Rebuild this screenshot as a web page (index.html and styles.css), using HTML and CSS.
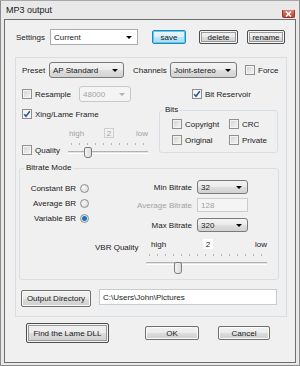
FILE: index.html
```html
<!DOCTYPE html>
<html lang="en">
<head>
  <meta charset="UTF-8" />
  <title>MP3 output</title>
  <link rel="stylesheet" href="styles.css">
</head>
<body>
  <div class="window">
    <div class="titlebar">
      <span class="title">MP3 output</span>
      <span class="close-btn"><svg width="7" height="6" viewBox="0 0 7 6"><path d="M1 0.5 L6 5.5 M6 0.5 L1 5.5" stroke="#fff" stroke-width="1.6"/></svg></span>
    </div>

    <div class="client">
      <div class="settings-row">
        <span class="lbl settings-lbl">Settings</span>
        <div class="combo edit settings-combo"><span>Current</span><i class="arrow"></i></div>
        <button class="btn btn-default save-btn">save</button>
        <button class="btn btn-framed delete-btn">delete</button>
        <button class="btn btn-framed rename-btn">rename</button>
      </div>

      <div class="panel">
        <div class="row preset-row">
          <span class="lbl preset-lbl">Preset</span>
          <div class="combo preset-combo"><span>AP Standard</span><i class="arrow"></i></div>
          <span class="lbl channels-lbl">Channels</span>
          <div class="combo channels-combo"><span>Joint-stereo</span><i class="arrow"></i></div>
          <span class="check force-check"><i class="box"></i>Force</span>
        </div>

        <div class="row resample-row">
          <span class="check resample-check"><i class="box"></i>Resample</span>
          <div class="combo disabled resample-combo"><span>48000</span><i class="arrow"></i></div>
          <span class="check reservoir-check"><i class="box checked"><svg width="8" height="8" viewBox="0 0 8 8"><path d="M1.2 4.2 L3 6.3 L6.8 1.2" fill="none" stroke="#2b4f9e" stroke-width="1.5"/></svg></i>Bit Reservoir</span>
        </div>

        <div class="mid">
          <div class="mid-left">
            <span class="check xing-check"><i class="box checked"><svg width="8" height="8" viewBox="0 0 8 8"><path d="M1.2 4.2 L3 6.3 L6.8 1.2" fill="none" stroke="#2b4f9e" stroke-width="1.5"/></svg></i>Xing/Lame Frame</span>
            <div class="scale-row quality-scale">
              <span class="scale-high">high</span>
              <span class="num-box disabled">2</span>
              <span class="scale-low">low</span>
            </div>
            <div class="quality-row">
              <span class="check quality-check"><i class="box"></i>Quality</span>
              <div class="slider quality-slider">
                <div class="ticks"></div>
                <div class="track"></div>
                <div class="thumb"></div>
              </div>
            </div>
          </div>

          <fieldset class="group bits-group">
            <legend>Bits</legend>
            <div class="bits-grid">
              <span class="check"><i class="box"></i>Copyright</span>
              <span class="check"><i class="box"></i>CRC</span>
              <span class="check"><i class="box"></i>Original</span>
              <span class="check"><i class="box"></i>Private</span>
            </div>
          </fieldset>
        </div>

        <fieldset class="group bitrate-group">
          <legend>Bitrate Mode</legend>
          <div class="bitrate-top">
            <div class="radio-col">
              <span class="radio constant-radio">Constant BR<i class="dot"></i></span>
              <span class="radio">Average BR<i class="dot"></i></span>
              <span class="radio">Variable BR<i class="dot selected"></i></span>
            </div>
            <div class="rate-col">
              <div class="rate-row min-row">
                <span class="lbl rate-lbl">Min Bitrate</span>
                <div class="combo rate-combo"><span>32</span><i class="arrow"></i></div>
              </div>
              <div class="rate-row avg-row">
                <span class="lbl rate-lbl disabled-text">Average Bitrate</span>
                <div class="textbox disabled rate-combo">128</div>
              </div>
              <div class="rate-row max-row">
                <span class="lbl rate-lbl">Max Bitrate</span>
                <div class="combo rate-combo"><span>320</span><i class="arrow"></i></div>
              </div>
            </div>
          </div>
          <div class="vbr">
            <span class="lbl vbr-lbl">VBR Quality</span>
            <div class="vbr-right">
              <div class="scale-row vbr-scale">
                <span class="scale-high">high</span>
                <span class="num-box">2</span>
                <span class="scale-low">low</span>
              </div>
              <div class="slider vbr-slider">
                <div class="ticks"></div>
                <div class="track"></div>
                <div class="thumb"></div>
              </div>
            </div>
          </div>
        </fieldset>

        <div class="row output-row">
          <button class="btn output-btn">Output Directory</button>
          <div class="textbox output-path">C:\Users\John\Pictures</div>
        </div>
      </div>

      <div class="bottom-row">
        <button class="btn btn-framed find-btn">Find the Lame DLL</button>
        <button class="btn ok-btn">OK</button>
        <button class="btn cancel-btn">Cancel</button>
      </div>
    </div>
  </div>
</body>
</html>
```

FILE: styles.css
```css
* {
  box-sizing: border-box;
}

body {
  margin: 0;
  background: #e6e6e6;
  font-family: "Liberation Sans", Arial, sans-serif;
  font-size: 8px;
  color: #1a1a1a;
}

.window {
  width: 300px;
  height: 366px;
  background: #e9e9e9;
  border: 1px solid #8c8c8c;
  border-top-color: #a8a8a8;
  padding: 0 3px 2px 3px;
  display: flex;
  flex-direction: column;
}

.titlebar {
  height: 18px;
  display: flex;
  align-items: flex-start;
}

.title {
  margin: 4px 0 0 2px;
  font-size: 9px;
  color: #1a1a1a;
}

.close-btn {
  margin: 9px 1px 0 auto;
  width: 13px;
  height: 8px;
  background: linear-gradient(#e08070, #c0402e);
  border: 1px solid #8e3a2e;
  border-top: none;
  border-radius: 0 0 2px 2px;
  display: flex;
  align-items: center;
  justify-content: center;
}

.client {
  flex: 1;
  background: #f0f0f0;
  border: 1px solid #6f6f6f;
}

.lbl {
  white-space: nowrap;
}

/* settings */
.settings-row {
  display: flex;
  align-items: center;
  height: 16px;
  margin-top: 9px;
  padding-left: 11px;
}

.settings-lbl {
  width: 34px;
}

.combo {
  height: 16px;
  display: flex;
  align-items: center;
  padding-left: 3px;
  border: 1px solid #7a7a7a;
  border-radius: 3px;
  background: linear-gradient(#f3f3f3, #ebebeb 50%, #dfdfdf 50%, #d2d2d2);
  white-space: nowrap;
}

.combo.edit {
  background: #fff;
  border: 1px solid #abadb3;
  border-radius: 0;
}

.combo.disabled {
  background: #f4f4f4;
  border-color: #c9c9c9;
  color: #a3a3a3;
}

.arrow {
  margin-left: auto;
  margin-right: 5px;
  width: 0;
  height: 0;
  border-left: 3px solid transparent;
  border-right: 3px solid transparent;
  border-top: 3px solid #000;
}

.combo.disabled .arrow {
  border-top-color: #b0b0b0;
}

.settings-combo {
  width: 88px;
}

.btn {
  font-family: inherit;
  font-size: 8px;
  color: #1a1a1a;
  padding: 0;
  height: 14px;
  border: 1px solid #707070;
  border-radius: 2px;
  background: linear-gradient(#f2f2f2, #ebebeb 50%, #dddddd 50%, #cfcfcf);
  box-shadow: inset 0 0 0 1px #fbfbfb;
}

.btn-default {
  border-color: #3c7fb1;
  background: linear-gradient(#eaf6fd, #d9f0fc 50%, #bee6fd 50%, #a7d9f5);
  box-shadow: inset 0 0 0 1px #48d4fb;
}

.btn-framed {
  border: 1px solid #4e4e4e;
  box-shadow: inset 0 0 0 1px #f6f6f6, inset 0 0 0 2px #9a9a9a;
}

.save-btn {
  width: 34px;
  margin-left: 14px;
}

.delete-btn {
  width: 39px;
  margin-left: 13px;
}

.rename-btn {
  width: 38px;
  margin-left: 9px;
}

/* main panel */
.panel {
  margin: 12px 0 0 10px;
  width: 272px;
  height: 260px;
  border: 1px solid #d5dfe5;
  padding: 4px 0 0 3px;
}

.row {
  display: flex;
  align-items: center;
}

.preset-row {
  height: 16px;
  margin-left: 3px;
}

.preset-lbl {
  width: 27px;
}

.preset-combo {
  width: 75px;
}

.channels-lbl {
  width: 37px;
  margin-left: 9px;
}

.channels-combo {
  width: 67px;
}

.force-check {
  margin-left: 8px;
}

.check {
  display: flex;
  align-items: center;
  white-space: nowrap;
}

.box {
  width: 10px;
  height: 10px;
  margin-right: 3px;
  border: 1px solid #8e8f8f;
  background: linear-gradient(135deg, #d2d2d2, #f6f6f6);
  box-shadow: inset 0 0 0 1px #f4f4f4;
  display: flex;
  align-items: center;
  justify-content: center;
}

.box.checked {
  background: #f6f6f6;
}

.resample-row {
  height: 16px;
  margin: 8px 0 0 3px;
}

.resample-check {
  width: 57px;
}

.resample-combo {
  width: 52px;
}

.reservoir-check {
  margin-left: 61px;
}

/* middle block */
.mid {
  display: flex;
  margin: 3px 0 0 3px;
}

.mid-left {
  width: 137px;
}

.xing-check {
  margin-top: 4px;
  height: 10px;
}

.scale-row {
  display: flex;
  align-items: center;
  height: 10px;
}

.quality-scale {
  margin: 9px 0 0 47px;
  color: #a3a3a3;
}

.scale-high {
  width: 35px;
}

.num-box {
  width: 10px;
  height: 10px;
  display: flex;
  align-items: center;
  justify-content: center;
  background: #fff;
  border: 1px solid #fff;
}

.num-box.disabled {
  background: #f0f0f0;
  border-color: #cfcfcf;
}

.quality-scale .scale-low {
  margin-left: 22px;
}

.quality-row {
  display: flex;
  align-items: center;
  margin-top: 3px;
  height: 18px;
}

.quality-check {
  width: 46px;
}

.slider {
  position: relative;
  height: 18px;
}

.ticks {
  height: 2px;
  margin: 2px 3px 0 3px;
  background: repeating-linear-gradient(90deg, #b4b4b4 0 1px, transparent 1px 8px);
}

.track {
  height: 3px;
  margin-top: 6px;
  border-top: 1px solid #b2b2b2;
  border-bottom: 1px solid #fff;
  background: #e4e4e4;
}

.thumb {
  position: absolute;
  width: 8px;
  height: 11px;
  border: 1px solid #7d7d7d;
  border-radius: 2px 2px 3px 3px;
  background: linear-gradient(90deg, #f3f3f3, #dcdcdc);
}

.quality-slider {
  width: 80px;
}

.quality-slider .thumb {
  left: 16px;
  top: 6px;
}

.group {
  margin: 0;
  padding: 0;
  border: 1px solid #d5dfe5;
  border-radius: 3px;
  min-width: 0;
}

.group legend {
  padding: 0 2px;
  line-height: 10px;
}

.bits-group {
  width: 119px;
  height: 48px;
}

.bits-group legend {
  margin-left: 3px;
}

.bits-grid {
  display: grid;
  grid-template-columns: 57px auto;
  row-gap: 6px;
  padding: 4px 0 0 12px;
}

.bits-grid .check {
  height: 10px;
}

/* bitrate mode */
.bitrate-group {
  width: 260px;
  height: 117px;
  margin-top: 4px;
}

.bitrate-group legend {
  margin-left: 4px;
}

.bitrate-top {
  display: flex;
}

.radio-col {
  width: 69px;
  display: flex;
  flex-direction: column;
  align-items: flex-end;
  gap: 5px;
  margin-top: 10px;
}

.radio {
  display: flex;
  align-items: center;
  height: 10px;
  white-space: nowrap;
}

.dot {
  width: 9px;
  height: 9px;
  margin-left: 4px;
  border-radius: 50%;
  border: 1px solid #8e8f8f;
  background: radial-gradient(circle at 40% 40%, #f8f8f8, #d4d4d4);
}

.dot.selected {
  background: radial-gradient(circle, #1d6fc0 0 2px, #8ab8e4 2.5px, #eaeaea 3.2px);
}

.rate-col {
  width: 159px;
  margin-top: 7px;
}

.rate-row {
  display: flex;
  align-items: center;
  justify-content: flex-end;
  height: 14px;
}

.avg-row {
  margin-top: 4px;
}

.max-row {
  margin-top: 6px;
}

.rate-lbl {
  margin-right: 5px;
}

.disabled-text {
  color: #a3a3a3;
}

.rate-combo {
  width: 51px;
  height: 14px;
}

.textbox {
  display: flex;
  align-items: center;
  padding-left: 3px;
  background: #fff;
  border: 1px solid #c7ccd1;
  white-space: nowrap;
}

.textbox.disabled {
  background: #f4f4f4;
  border-color: #cdcdcd;
  color: #a3a3a3;
}

.vbr {
  display: flex;
  margin-top: 7px;
}

.vbr-lbl {
  width: 51px;
  margin: 4px 0 0 75px;
  height: 10px;
  line-height: 10px;
}

.vbr-right {
  width: 121px;
}

.vbr-scale {
  margin-left: 5px;
}

.vbr-scale .scale-high {
  width: 53px;
}

.vbr-scale .scale-low {
  margin-left: 42px;
}

.vbr-slider {
  height: 20px;
}

.vbr-slider .ticks {
  margin-top: 5px;
}

.vbr-slider .thumb {
  left: 28px;
  top: 8px;
  height: 12px;
}

.output-row {
  margin: 9px 0 0 2px;
  align-items: flex-start;
}

.output-btn {
  width: 70px;
  height: 17px;
  margin-top: 1px;
}

.output-path {
  width: 178px;
  height: 16px;
  margin-left: 8px;
}

/* bottom buttons */
.bottom-row {
  display: flex;
  align-items: center;
  margin: 6px 0 0 21px;
  height: 20px;
}

.find-btn {
  width: 83px;
  height: 20px;
}

.ok-btn {
  width: 54px;
  margin-left: 36px;
}

.cancel-btn {
  width: 52px;
  margin-left: 19px;
}
```
